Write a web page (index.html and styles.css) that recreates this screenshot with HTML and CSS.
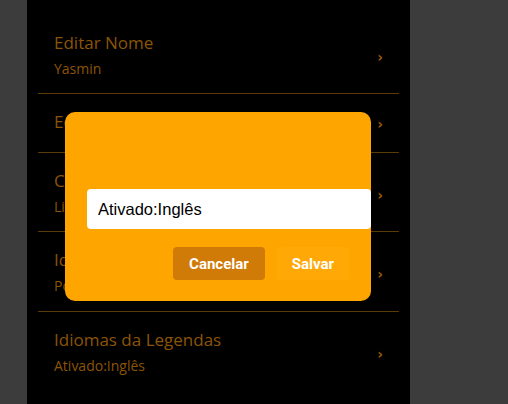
FILE: index.html
```html
<!DOCTYPE html>
<html lang="pt">
<head>
<meta charset="utf-8">
<title>Configurações</title>
<link rel="stylesheet" href="styles.css">
</head>
<body>
<div class="panel">
  <ul class="list">
    <li class="row">
      <div class="texts"><div class="title">Editar Nome</div><div class="sub">Yasmin</div></div>
      <span class="chev">›</span>
    </li>
    <li class="row single">
      <div class="texts"><div class="title">Editar E-mail</div></div>
      <span class="chev">›</span>
    </li>
    <li class="row">
      <div class="texts"><div class="title">Configurar Legendas</div><div class="sub">Ligado</div></div>
      <span class="chev">›</span>
    </li>
    <li class="row tall">
      <div class="texts"><div class="title">Idioma do Áudio</div><div class="sub">Português</div></div>
      <span class="chev">›</span>
    </li>
    <li class="row last">
      <div class="texts"><div class="title">Idiomas da Legendas</div><div class="sub">Ativado:Inglês</div></div>
      <span class="chev">›</span>
    </li>
  </ul>
  <div class="modal">
    <input class="field" type="text" value="Ativado:Inglês">
    <div class="actions">
      <button class="btn cancel">Cancelar</button>
      <button class="btn save">Salvar</button>
    </div>
  </div>
</div>
</body>
</html>
```
FILE: styles.css
```css
html, body {
  margin: 0;
  padding: 0;
  background: #3c3c3c;
  height: 404px;
  overflow: hidden;
}
.panel {
  position: relative;
  margin-left: 27px;
  width: 383px;
  height: 404px;
  background: #000;
  padding: 15px 11px 0;
  box-sizing: border-box;
}
.list {
  list-style: none;
  margin: 0;
  padding: 0;
}
.row {
  display: flex;
  align-items: center;
  justify-content: space-between;
  padding: 15px 16px 13px;
  border-bottom: 1px solid #5a3a06;
}
.row.single {
  padding: 15px 16px 17px;
}
.row.tall {
  padding-bottom: 14px;
}
.row.last {
  border-bottom: none;
}
.texts {
  font-family: "Open Sans", "Noto Sans", sans-serif;
  color: #8c5406;
}
.title {
  font-size: 17px;
  line-height: 26px;
}
.sub {
  font-size: 14px;
  line-height: 22px;
  margin-top: 2px;
}
.chev {
  font-family: "DejaVu Sans", sans-serif;
  font-weight: bold;
  color: #9a5c08;
  font-size: 14px;
  margin-top: 4px;
}
.modal {
  position: absolute;
  left: 38px;
  top: 112px;
  width: 306px;
  height: 189px;
  box-sizing: border-box;
  padding: 77px 22px 21px;
  background: #ffa500;
  border-radius: 10px;
  display: flex;
  flex-direction: column;
}
.field {
  display: block;
  width: 100%;
  box-sizing: content-box;
  height: 40px;
  padding: 0 11px;
  margin: 0;
  border: none;
  border-radius: 4px;
  background: #fff;
  font-family: "Liberation Sans", Arial, sans-serif;
  font-size: 16.5px;
  color: #000;
  outline: none;
}
.actions {
  display: flex;
  justify-content: flex-end;
  gap: 12px;
  margin-top: 18px;
}
.btn {
  height: 33px;
  padding: 0 16px;
  border: none;
  border-radius: 4px;
  font-family: Roboto, "Liberation Sans", sans-serif;
  font-weight: bold;
  font-size: 15px;
  color: #fff;
}
.cancel {
  background: #d07a08;
}
.save {
  background: #ffa806;
  padding: 0 15px;
}
```
